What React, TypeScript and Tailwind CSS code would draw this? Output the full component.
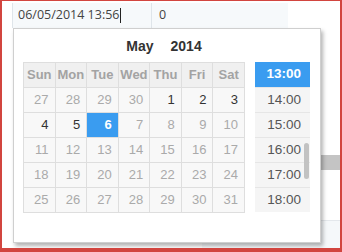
import React from 'react';

const days = ['Sun', 'Mon', 'Tue', 'Wed', 'Thu', 'Fri', 'Sat'];

type Cell = { d: number; on?: boolean; sel?: boolean };

const weeks: Cell[][] = [
  [{ d: 27 }, { d: 28 }, { d: 29 }, { d: 30 }, { d: 1, on: true }, { d: 2, on: true }, { d: 3, on: true }],
  [{ d: 4, on: true }, { d: 5, on: true }, { d: 6, sel: true }, { d: 7 }, { d: 8 }, { d: 9 }, { d: 10 }],
  [{ d: 11 }, { d: 12 }, { d: 13 }, { d: 14 }, { d: 15 }, { d: 16 }, { d: 17 }],
  [{ d: 18 }, { d: 19 }, { d: 20 }, { d: 21 }, { d: 22 }, { d: 23 }, { d: 24 }],
  [{ d: 25 }, { d: 26 }, { d: 27 }, { d: 28 }, { d: 29 }, { d: 30 }, { d: 31 }],
];

const times = ['13:00', '14:00', '15:00', '16:00', '17:00', '18:00'];

export default function App() {
  return (
    <div className="relative w-[342px] h-[252px] overflow-hidden bg-white border-t border-x-2 border-b-4 border-[#d2453f] font-['Liberation_Sans',Arial,sans-serif]">
      {/* inputs row */}
      <div className="flex ml-[10px] mt-[2px] h-[25px] font-['Open_Sans',sans-serif] text-[12.5px] text-[#444]">
        <div className="w-[139px] flex items-center pl-[5px] bg-[#f6f9fb] border-l border-[#dfe5ea]">
          <span>06/05/2014 13:56</span>
          <span className="w-px h-[15px] bg-[#222] ml-px" />
        </div>
        <div className="w-[137px] flex items-center pl-[7px] bg-[#f6f9fb] border-l border-[#dfe5ea]">0</div>
      </div>

      {/* background rows behind popup */}
      <div className="ml-[200px] mt-[127px] h-[15px] bg-[#c4c4c4]" />
      <div className="ml-[200px] mt-[50px] h-px bg-[#e4e8ec]" />
      <div className="ml-[200px] h-[40px] bg-[#f5f8fa]" />

      {/* picker popup */}
      <div className="absolute left-[11px] top-[27px] w-[308px] h-[215px] bg-white border border-[#cfcfcf] shadow-[2px_3px_4px_rgba(0,0,0,0.3)]">
        <div className="flex justify-center gap-[17px] pt-[7px] h-[32px] pr-[6px] text-[14px] font-bold text-[#333]">
          <span>May</span>
          <span>2014</span>
        </div>
        <div className="flex items-start ml-[9px] mt-px">
          <table className="w-[222px] border-collapse table-fixed text-[13px]">
            <thead>
              <tr className="h-[25px]">
                {days.map((d) => (
                  <th key={d} className="border border-[#dedede] bg-[#f0f0f0] text-[#a3a3a3] font-bold text-center p-0">
                    {d}
                  </th>
                ))}
              </tr>
            </thead>
            <tbody>
              {weeks.map((w, i) => (
                <tr key={i} className="h-[25px]">
                  {w.map((c, j) => (
                    <td
                      key={j}
                      className={
                        c.sel
                          ? 'border border-[#dedede] bg-[#3a9cf0] text-white font-bold text-right pr-[6px] p-0'
                          : c.on
                          ? 'border border-[#dedede] bg-[#f8f8f8] text-[#333] text-right pr-[6px] p-0'
                          : 'border border-[#dedede] bg-[#f8f8f8] text-[#aaa] text-right pr-[6px] p-0'
                      }
                    >
                      {c.d}
                    </td>
                  ))}
                </tr>
              ))}
            </tbody>
          </table>
          <div className="relative ml-[10px] w-[55px] text-[13.5px]">
            {times.map((t, i) => (
              <div
                key={t}
                className={
                  i === 0
                    ? 'h-[25px] flex items-center justify-end pr-[9px] bg-[#3a9cf0] text-white font-bold'
                    : 'h-[25px] flex items-center justify-end pr-[9px] bg-[#f5f5f5] text-[#555] border-t border-[#e6e6e6]'
                }
              >
                {t}
              </div>
            ))}
            <div className="absolute left-[49px] top-[81px] w-[5px] h-[36px] rounded-full bg-[#c2c2c2]" />
          </div>
        </div>
      </div>
    </div>
  );
}
